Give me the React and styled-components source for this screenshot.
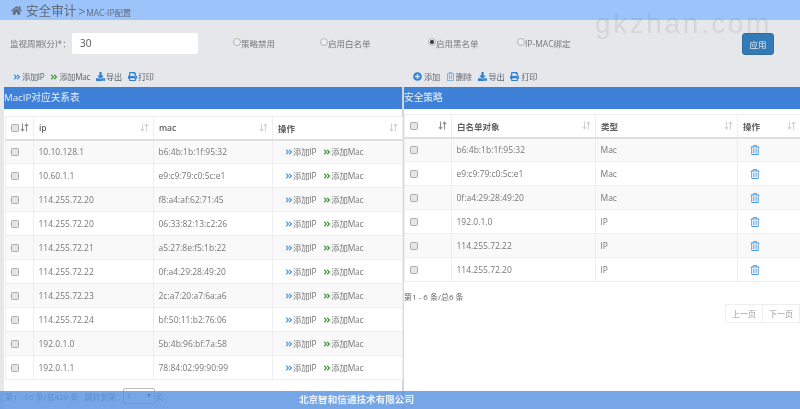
import React from "react";
import styled, { createGlobalStyle } from "styled-components";
import { FaHome, FaAngleDoubleRight, FaPrint, FaPlusCircle, FaRegTrashAlt, FaDownload } from "react-icons/fa";

const Global = createGlobalStyle`
  html, body { margin: 0; padding: 0; background: #fff; }
  * { box-sizing: border-box; }
`;
const FONT = `"Open Sans", "Noto Sans CJK SC", sans-serif`;

const Page = styled.div`
  position: relative; width: 800px; height: 409px; overflow: hidden; background: #fff;
  font-family: ${FONT}; font-size: 9px; color: #666; filter: blur(0.45px);
`;
const Header = styled.header`
  height: 20px; background: #9cc4fa; display: flex; align-items: center; padding: 1px 0 0 11px; color: #5f6b78; gap: 3px;
`;
const HeaderTitle = styled.span`font-size: 12.6px; margin-left: 1px; line-height: 20px;`;
const HeaderSub = styled.span`font-size: 8.4px; margin-left: -1px; padding-top: 2px; &::before { content: ">"; font-size: 12px; margin-right: 1px; }`;
const Watermark = styled.div`
  position: absolute; left: 595px; top: 8px; font: 28px "Liberation Sans", sans-serif; letter-spacing: 2.6px; color: rgba(90,100,110,.13); pointer-events: none;
`;
const ConfigBar = styled.section`
  height: 67px; background: #e6e7eb; display: flex; flex-direction: column;
`;
const FormRow = styled.div`
  height: 48px; position: relative; display: flex; align-items: flex-start; padding: 13px 0 0 10px;
`;
const FieldLabel = styled.label`font-size: 8.5px; line-height: 22px; width: 62px; color: #777;`;
const TextInput = styled.div`
  width: 126px; height: 21px; background: #fff; border-radius: 2px; font-size: 10px; line-height: 21px; padding-left: 8px; color: #555;
`;
const RadioItem = styled.label`
  width: ${p => p.$w}px; display: flex; align-items: flex-start; font-size: 8.5px; line-height: 22px; color: #777;
`;
const RadioDot = styled.span`
  width: 8px; height: 8px; margin-top: 5px; border-radius: 50%; border: 1px solid #b5b5b5; background: ${p => p.$on ? "radial-gradient(circle, #444 0 1.8px, #eee 2.4px)" : "#eee"}; flex: none;
`;
const RadioRow = styled.div`display: flex; margin-left: 35px;`;
const ApplyButton = styled.button`
  position: absolute; left: 742px; top: 13px; width: 32px; height: 22px; border: 1px solid #2e6da4; background: #337ab7; color: #e8eef5; border-radius: 3px; font: 8.5px ${FONT}; padding: 0;
`;
const Toolbars = styled.div`display: grid; grid-template-columns: 403px 397px; flex: 1;`;
const Toolbar = styled.div`display: flex; align-items: center; gap: ${p => p.$gap}px; padding: 0 0 0 ${p => p.$pad}px; height: 17px;`;
const ToolItem = styled.span`display: inline-flex; align-items: center; gap: ${p => p.$gap ?? 1}px; font-size: 8.2px; line-height: 12px; letter-spacing: -0.3px; color: #5c6570; svg { flex: none; }`;
const Panels = styled.div`display: grid; grid-template-columns: 403px 397px; height: 322px;`;
const LeftPanel = styled.section`
  background: #fff; border-left: 4px solid #e6e7eb; border-right: 1px solid #cfd0d2; min-width: 0;
`;
const RightPanel = styled.section`border-left: 1px solid #d9dadc; min-width: 0;`;
const PanelBar = styled.h2`
  margin: 0; height: 22px; background: #3f80d8; color: #e9f1fb; font-size: 9.7px; font-weight: 400; line-height: 22px; padding-left: 0;
`;
const Table = styled.table`
  width: ${p => p.$w}px; margin: ${p => p.$mt}px 0 0 ${p => p.$ml}px; border-collapse: collapse; table-layout: fixed;
`;
const Th = styled.th`
  height: 23px; border: 1px solid #eeeeee; border-bottom: 2px solid #dfdfdf; text-align: left; font-size: 8.5px; font-weight: 600; color: #5e5e5e; padding: 0 4px 0 5px;
`;
const Td = styled.td`
  height: 24px; border: 1px solid #eeeeee; padding: 0 4.5px; font-size: 8.5px; color: #777; white-space: nowrap; background: ${p => p.$odd ? "#f9f9f9" : "#fff"};
`;
const ThInner = styled.div`display: flex; align-items: center; justify-content: space-between;`;
const Check = styled.span`
  display: block; width: 8px; height: 8px; border: 1px solid #aaa; border-radius: 1.5px; background: #e6e6e6;
`;
const Actions = styled.div`display: flex; gap: 7px; padding-left: 7.5px;`;
const Action = styled.span`display: inline-flex; align-items: center; gap: 0; color: #777; font-size: 8.4px; line-height: 11px; letter-spacing: -0.2px;`;
const TrashCell = styled.div`padding-left: 7px; color: #4d9bdc; display: flex;`;
const Info = styled.div`font-size: 8px; color: #666; margin-top: 9px; padding-left: 0;`;
const Pager = styled.div`display: flex; justify-content: flex-end; margin-top: 2px;`;
const PagerBtn = styled.span`
  width: ${p => p.$w}px; height: 19px; border: 1px solid #eee; margin-left: -1px; line-height: 17px; text-align: center; font-size: 8px; color: #999;
`;
const BehindPager = styled.div`
  display: flex; align-items: center; margin: 8px 0 0 1px; font-size: 8px; color: #777; gap: 1px;
`;
const PageSelect = styled.span`
  width: 32px; height: 16px; margin-left: -3px; border: 1px solid #bbb; border-radius: 2px; padding-left: 3px; line-height: 14px; position: relative;
  &::after { content: ""; position: absolute; right: 3px; top: 5px; border: 2px solid transparent; border-top: 3px solid #333; }
`;
const Footer = styled.footer`
  position: absolute; left: 0; right: 0; bottom: 0; height: 18px; background: rgba(88,146,224,.82); color: #eef4fc; text-align: center; line-height: 18px; font-size: 9.6px; font-weight: 600; text-indent: -87px;
`;

const SortIcon = ({ dark }) => (
  <svg width="9" height="9" viewBox="0 0 9 9" fill="none" stroke={dark ? "#8d8d8d" : "#d2d2d2"} strokeWidth="1.1">
    <path d="M2.5 0.5v7.5M0.8 6l1.7 2 1.7-2M6.5 8.5V1M4.8 3l1.7-2 1.7 2" />
  </svg>
);
const Chev = ({ c }) => <FaAngleDoubleRight size={8} color={c} />;
const Sav = () => <FaDownload size={9} color="#337fd0" />;
const Pr = () => <FaPrint size={9} color="#337fd0" />;

const leftRows = [
  ["10.10.128.1", "b6:4b:1b:1f:95:32"], ["10.60.1.1", "e9:c9:79:c0:5c:e1"], ["114.255.72.20", "f8:a4:af:62:71:45"],
  ["114.255.72.20", "06:33:82:13:c2:26"], ["114.255.72.21", "a5:27:8e:f5:1b:22"], ["114.255.72.22", "0f:a4:29:28:49:20"],
  ["114.255.72.23", "2c:a7:20:a7:6a:a6"], ["114.255.72.24", "bf:50:11:b2:76:06"], ["192.0.1.0", "5b:4b:96:bf:7a:58"], ["192.0.1.1", "78:84:02:99:90:99"],
];
const rightRows = [
  ["b6:4b:1b:1f:95:32", "Mac"], ["e9:c9:79:c0:5c:e1", "Mac"], ["0f:a4:29:28:49:20", "Mac"], ["192.0.1.0", "IP"], ["114.255.72.22", "IP"], ["114.255.72.20", "IP"],
];

export default function App() {
  return (
    <Page>
      <Global />
      <Header>
        <FaHome size={11} color="#5f6b78" />
        <HeaderTitle>安全审计</HeaderTitle>
        <HeaderSub>MAC-IP配置</HeaderSub>
      </Header>
      <Watermark>gkzhan.com</Watermark>
      <ConfigBar>
        <FormRow>
          <FieldLabel>监视周期(分)*：</FieldLabel>
          <TextInput>30</TextInput>
          <RadioRow>
            <RadioItem $w={87}><RadioDot />策略禁用</RadioItem>
            <RadioItem $w={108}><RadioDot />启用白名单</RadioItem>
            <RadioItem $w={89}><RadioDot $on />启用黑名单</RadioItem>
            <RadioItem $w={90}><RadioDot />IP-MAC绑定</RadioItem>
          </RadioRow>
          <ApplyButton>应用</ApplyButton>
        </FormRow>
        <Toolbars>
          <Toolbar $gap={6} $pad={13}>
            <ToolItem><Chev c="#3f8fe0" />添加IP</ToolItem>
            <ToolItem><Chev c="#3f9a3a" />添加Mac</ToolItem>
            <ToolItem><Sav />导出</ToolItem>
            <ToolItem><Pr />打印</ToolItem>
          </Toolbar>
          <Toolbar $gap={6} $pad={10}>
            <ToolItem $gap={2}><FaPlusCircle size={9} color="#337fd0" />添加</ToolItem>
            <ToolItem><FaRegTrashAlt size={9} color="#6aa8e4" />删除</ToolItem>
            <ToolItem $gap={2}><Sav />导出</ToolItem>
            <ToolItem $gap={2}><Pr />打印</ToolItem>
          </Toolbar>
        </Toolbars>
      </ConfigBar>
      <Panels>
        <LeftPanel>
          <PanelBar>MacIP对应关系表</PanelBar>
          <Table $w={397} $mt={7} $ml={1}>
            <colgroup><col width="28" /><col width="120" /><col width="119" /><col width="130" /></colgroup>
            <thead>
              <tr>
                <Th><ThInner><Check /><SortIcon dark /></ThInner></Th>
                <Th><ThInner>ip<SortIcon /></ThInner></Th>
                <Th><ThInner>mac<SortIcon /></ThInner></Th>
                <Th><ThInner>操作<SortIcon /></ThInner></Th>
              </tr>
            </thead>
            <tbody>
              {leftRows.map((r, i) => (
                <tr key={i}>
                  <Td $odd={i % 2 === 0}><Check /></Td>
                  <Td $odd={i % 2 === 0}>{r[0]}</Td>
                  <Td $odd={i % 2 === 0}>{r[1]}</Td>
                  <Td $odd={i % 2 === 0}>
                    <Actions>
                      <Action><Chev c="#4d9be6" />添加IP</Action>
                      <Action><Chev c="#3f9a3a" />添加Mac</Action>
                    </Actions>
                  </Td>
                </tr>
              ))}
            </tbody>
          </Table>
          <BehindPager>第1 - 10 条/总429 条&nbsp;&nbsp; 跳转到第：<PageSelect>1</PageSelect>页</BehindPager>
        </LeftPanel>
        <RightPanel>
          <PanelBar>安全策略</PanelBar>
          <Table $w={396} $mt={5} $ml={0}>
            <colgroup><col width="47" /><col width="144" /><col width="142" /><col width="63" /></colgroup>
            <thead>
              <tr>
                <Th><ThInner><Check /><SortIcon dark /></ThInner></Th>
                <Th><ThInner>白名单对象<SortIcon /></ThInner></Th>
                <Th><ThInner>类型<SortIcon /></ThInner></Th>
                <Th><ThInner>操作<SortIcon /></ThInner></Th>
              </tr>
            </thead>
            <tbody>
              {rightRows.map((r, i) => (
                <tr key={i}>
                  <Td $odd={i % 2 === 0}><Check /></Td>
                  <Td $odd={i % 2 === 0}>{r[0]}</Td>
                  <Td $odd={i % 2 === 0}>{r[1]}</Td>
                  <Td $odd={i % 2 === 0}><TrashCell><FaRegTrashAlt size={10} /></TrashCell></Td>
                </tr>
              ))}
            </tbody>
          </Table>
          <Info>第1 - 6 条/总6 条</Info>
          <Pager>
            <PagerBtn $w={38}>上一页</PagerBtn>
            <PagerBtn $w={38}>下一页</PagerBtn>
          </Pager>
        </RightPanel>
      </Panels>
      <Footer>北京智和信通技术有限公司</Footer>
    </Page>
  );
}
